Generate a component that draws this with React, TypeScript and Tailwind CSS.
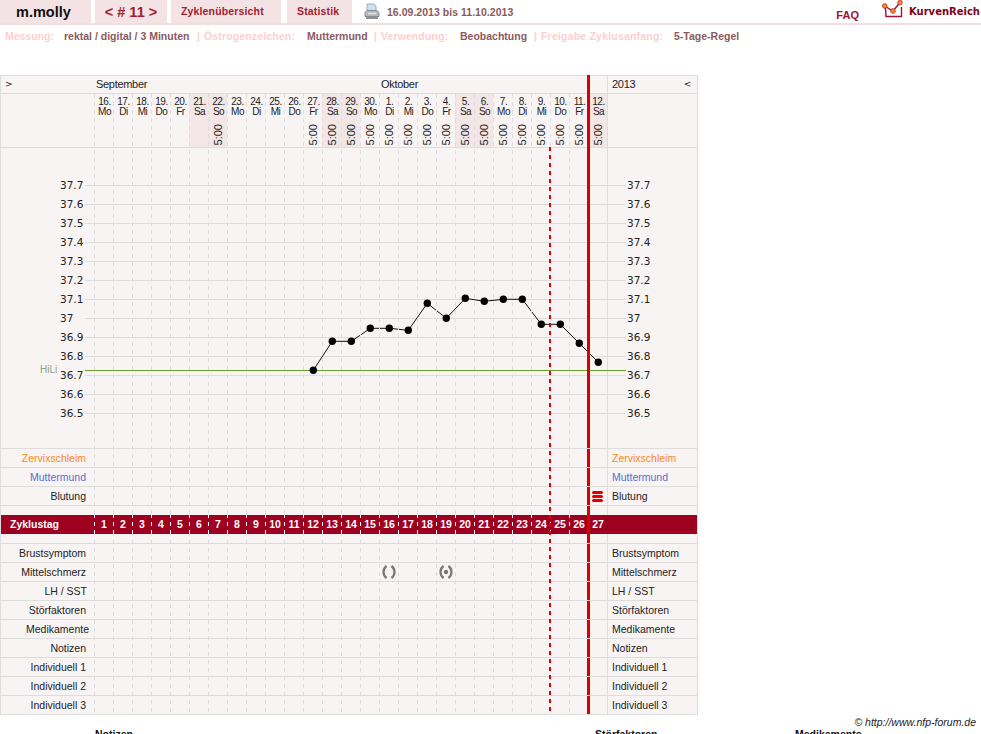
import type { ReactNode } from "react";

const font = "font-['Liberation_Sans',Arial,sans-serif]";

const days = [
  ["16.", "Mo"], ["17.", "Di"], ["18.", "Mi"], ["19.", "Do"], ["20.", "Fr"], ["21.", "Sa"], ["22.", "So"],
  ["23.", "Mo"], ["24.", "Di"], ["25.", "Mi"], ["26.", "Do"], ["27.", "Fr"], ["28.", "Sa"], ["29.", "So"],
  ["30.", "Mo"], ["1.", "Di"], ["2.", "Mi"], ["3.", "Do"], ["4.", "Fr"], ["5.", "Sa"], ["6.", "So"],
  ["7.", "Mo"], ["8.", "Di"], ["9.", "Mi"], ["10.", "Do"], ["11.", "Fr"], ["12.", "Sa"],
];

// days that have a measuring time
const timed = [6, 11, 12, 13, 14, 15, 16, 17, 18, 19, 20, 21, 22, 23, 24, 25, 26];

const temps = [370.3, 341.3, 341.3, 328.3, 328.3, 330.3, 303.3, 318.3, 298.3, 301.3, 299.3, 299.3, 324.3, 324.3, 343.3, 362.3];
const scale = ["37.7", "37.6", "37.5", "37.4", "37.3", "37.2", "37.1", "37", "36.9", "36.8", "36.7", "36.6", "36.5"];

// y of the row lines the red marker is cut by
const rowLines = [448, 467, 486, 505, 543, 562, 581, 600, 619, 638, 657, 676, 695];

function Row({ label, color = "text-[#222]", pad = "pr-[8px]", cells }: { label: string; color?: string; pad?: string; cells?: Record<number, ReactNode> }) {
  return (
    <div className="flex h-[19px] border-t border-[#ddd] text-[10.5px] leading-[18px]">
      <div className={`w-[93px] shrink-0 whitespace-nowrap text-right ${pad} ${color}`}>{label}</div>
      {days.map((_, i) => (
        <div key={i} className="flex h-[18px] w-[19px] shrink-0 items-center justify-center">
          {cells?.[i]}
        </div>
      ))}
      <div className={`flex-1 border-l border-[#ddd] pl-[4px] ${color}`}>{label}</div>
    </div>
  );
}

function Pain({ dot }: { dot?: boolean }) {
  return (
    <svg width="14" height="14" viewBox="0 0 14 14" fill="none" stroke="#777" strokeWidth="2.2" className="shrink-0">
      <path d="M4.5 1C0.5 4 0.5 10 4.5 13" />
      <path d="M9.5 1C13.5 4 13.5 10 9.5 13" />
      {dot && <circle cx="7" cy="7" r="2.2" fill="#777" stroke="none" />}
    </svg>
  );
}

function Bleeding() {
  return (
    <div className="flex w-[11px] shrink-0 flex-col gap-[1px]">
      <div className="h-[3px] rounded-[2px] bg-[#e00000]" />
      <div className="h-[3px] rounded-[2px] bg-[#e00000]" />
      <div className="h-[3px] rounded-[2px] bg-[#e00000]" />
    </div>
  );
}

function Chart() {
  return (
    <svg width="696" height="300" viewBox="1 148 696 300" className="block">
      {scale.map((s, i) => {
        const y = 185 + i * 19;
        return (
          <g key={s}>
            <line x1="85" x2="626" y1={y + 0.5} y2={y + 0.5} stroke="#ddd" />
            <text x="60" y={y + 4} fontFamily="DejaVu Sans" fontSize="10.5" fill="#222">{s}</text>
            <text x="627" y={y + 4} fontFamily="DejaVu Sans" fontSize="10.5" fill="#222">{s}</text>
          </g>
        );
      })}
      <line x1="607.5" x2="607.5" y1="148" y2="448" stroke="#ddd" />
      <text x="40" y="373" fontFamily="Liberation Sans" fontSize="10" fill="#8f9f80">HiLi</text>
      <line x1="85" x2="626" y1="370.5" y2="370.5" stroke="#6a9e2a" />
      <polyline points={temps.map((y, i) => `${313.3 + i * 19},${y}`).join(" ")} fill="none" stroke="#111" strokeWidth="1" />
      {temps.map((y, i) => (
        <circle key={i} cx={313.3 + i * 19} cy={y} r="3.7" fill="#000" />
      ))}
    </svg>
  );
}

function Markers() {
  const lines = days.map((_, i) => 94.5 + i * 19);
  return (
    <svg width="698" height="640" viewBox="0 75 698 640" className="pointer-events-none absolute left-[-1px] top-0">
      {lines.map((x) => (
        <g key={x}>
          <line x1={x} x2={x} y1="94" y2="515" stroke="#ddd" strokeDasharray="4 4" />
          <line x1={x} x2={x} y1="515" y2="534" stroke="#fff" strokeDasharray="4 4" strokeDashoffset="1" />
          <line x1={x} x2={x} y1="534" y2="714" stroke="#ddd" strokeDasharray="4 4" strokeDashoffset="2" />
        </g>
      ))}
      <line x1="550" x2="550" y1="147" y2="711" stroke="#dd0000" strokeWidth="2" strokeDasharray="4 4" />
      <rect x="587" y="75" width="3" height="639" fill="#d80000" />
      {rowLines.map((y) => (
        <rect key={y} x="587" y={y} width="3" height="1" fill="#eec8c8" />
      ))}
    </svg>
  );
}

function Printer() {
  return (
    <svg width="18" height="18" viewBox="0 0 18 18">
      <path d="M4 1h7l2 2v6H4z" fill="#cfe0f0" stroke="#8aa0b8" strokeWidth="0.8" />
      <path d="M2 9.5 4 7.5h10l2 2v4H2z" fill="#b8bcc0" stroke="#777" strokeWidth="0.8" />
      <path d="M3 13.5h12v2.5H3z" fill="#8c8f92" />
      <path d="M5 10.5h8" stroke="#eee" strokeWidth="1" />
    </svg>
  );
}

function Logo() {
  return (
    <svg width="23" height="19" viewBox="0 0 23 19">
      <path d="M3 6.5C4 11 4 14 4 16.5H19.5V7" fill="none" stroke="#a3123a" strokeWidth="1.4" />
      <path d="M2.5 6 11 11 18 2.5" fill="none" stroke="#a3123a" strokeWidth="1.4" />
      <circle cx="2.8" cy="6" r="2.4" fill="#f08a1c" stroke="#a3123a" strokeWidth="0.6" />
      <circle cx="11" cy="11" r="2.4" fill="#f08a1c" stroke="#a3123a" strokeWidth="0.6" />
      <circle cx="18" cy="2.6" r="2.4" fill="#f08a1c" stroke="#a3123a" strokeWidth="0.6" />
    </svg>
  );
}

export default function App() {
  return (
    <div className={`h-[734px] w-[981px] overflow-hidden bg-white ${font}`}>
      {/* Top navigation */}
      <div className="flex h-[25px] items-start border-b-2 border-[#f3dfe0]">
        <div className="flex h-[23px] w-[91px] items-center bg-[#f3e3e4] pl-[16px] pt-[3px] text-[14.5px] font-bold text-[#111]">m.molly</div>
        <div className="ml-[4px] flex h-[23px] w-[72px] items-center justify-center bg-[#f3e3e4] pt-[3px] text-[14.5px] font-bold text-[#a51c30]">&lt; # 11 &gt;</div>
        <div className="ml-[4px] flex h-[23px] w-[110px] items-center bg-[#f3e3e4] pl-[10px] pt-[1px] text-[10.5px] font-bold tracking-[0.15px] text-[#a51c30]">Zyklenübersicht</div>
        <div className="ml-[6px] flex h-[23px] w-[65px] items-center bg-[#f3e3e4] pl-[10px] pt-[1px] text-[10.5px] font-bold tracking-[0.15px] text-[#a51c30]">Statistik</div>
        <div className="ml-[11px] mt-[3px]"><Printer /></div>
        <div className="ml-[6px] mt-[5px] text-[10.5px] font-bold tracking-[0.03px] text-[#8a5a60]">16.09.2013 bis 11.10.2013</div>
        <div className="ml-auto mt-[7px] text-[11px] font-bold text-[#a01030]">FAQ</div>
        <div className="ml-[23px]"><Logo /></div>
        <div className="ml-[4px] mr-[1px] mt-[4px] font-['DejaVu_Sans',sans-serif] text-[10px] font-bold text-[#800020]">KurvenReich</div>
      </div>

      {/* Settings line */}
      <div className="flex h-[50px] pl-[5px] pt-[4px] text-[10.5px] font-bold leading-[14px]">
        <span className="w-[59px] text-[#fbd0d0]">Messung:</span>
        <span className="w-[133px] text-[#8a5a60]">rektal / digital / 3 Minuten</span>
        <span className="w-[7px] text-[#fbd0d0]">|</span>
        <span className="w-[103px] tracking-[0.15px] text-[#fbd0d0]">Östrogenzeichen:</span>
        <span className="w-[67px] text-[#8a5a60]">Muttermund</span>
        <span className="w-[7px] text-[#fbd0d0]">|</span>
        <span className="w-[79px] tracking-[0.1px] text-[#fbd0d0]">Verwendung:</span>
        <span className="w-[74px] text-[#8a5a60]">Beobachtung</span>
        <span className="w-[7px] text-[#fbd0d0]">|</span>
        <span className="w-[133px] tracking-[0.2px] text-[#fbd0d0]">Freigabe Zyklusanfang:</span>
        <span className="text-[#8a5a60]">5-Tage-Regel</span>
      </div>

      {/* Chart table */}
      <div className="relative w-[698px] border-x border-b border-[#ddd] bg-[#f9f4f4] text-[#222]">
        <div className="flex h-[19px] border-y border-[#ddd] text-[11px] leading-[17px] tracking-[-0.3px]">
          <div className="w-[95px] pl-[4px] font-['DejaVu_Sans',sans-serif] text-[9px]">&gt;</div>
          <div className="w-[285px]">September</div>
          <div className="w-[226px]">Oktober</div>
          <div className="flex flex-1 justify-between border-l border-[#ddd] pl-[4px] pr-[6px]">
            <span>2013</span>
            <span className="font-['DejaVu_Sans',sans-serif] text-[9px]">&lt;</span>
          </div>
        </div>

        <div className="flex h-[54px] border-b border-[#ddd]">
          <div className="w-[93px] shrink-0" />
          {days.map(([d, w], i) => (
            <div key={i} className={`flex w-[19px] shrink-0 flex-col items-center pl-[2px] pt-[3px] text-[10px] leading-[9.5px] tracking-[-0.5px] ${i % 7 === 5 || i % 7 === 6 ? "bg-[#f3e6e6]" : ""}`}>
              <span>{d}</span>
              <span>{w}</span>
              {timed.includes(i) && (
                <span className="mt-[8px] rotate-180 text-[11px] leading-[11px] tracking-normal [writing-mode:vertical-rl]">5:00</span>
              )}
            </div>
          ))}
          <div className="flex-1 border-l border-[#ddd]" />
        </div>

        <Chart />

        <Row label="Zervixschleim" color="text-[#f58a1f]" />
        <Row label="Muttermund" color="text-[#5570d0]" />
        <Row label="Blutung" cells={{ 26: <Bleeding /> }} />

        <div className="flex h-[10px] border-t border-[#ddd]">
          <div className="w-[606px]" />
          <div className="flex-1 border-l border-[#ddd]" />
        </div>
        <div className="flex h-[19px] bg-[#9e0020] text-[10.5px] font-bold leading-[19px] text-white">
          <div className="w-[93px] shrink-0 pl-[9px]">Zyklustag</div>
          {days.map((_, i) => (
            <div key={i} className="w-[19px] shrink-0 pl-[1px] text-center">{i + 1}</div>
          ))}
        </div>
        <div className="flex h-[9px]">
          <div className="w-[606px]" />
          <div className="flex-1 border-l border-[#ddd]" />
        </div>

        <Row label="Brustsymptom" />
        <Row label="Mittelschmerz" cells={{ 15: <Pain />, 18: <Pain dot /> }} />
        <Row label="LH / SST" pad="pr-[7px]" />
        <Row label="Störfaktoren" />
        <Row label="Medikamente" pad="pr-[5px]" />
        <Row label="Notizen" />
        <Row label="Individuell 1" />
        <Row label="Individuell 2" />
        <Row label="Individuell 3" />

        <Markers />
      </div>

      {/* Footer */}
      <div className="flex justify-end pr-[5px] text-[10.5px] italic leading-[14px] text-[#222]">© http://www.nfp-forum.de</div>
      <div className="mt-[-2px] flex pl-[95px] text-[10.5px] font-bold leading-[14px] text-[#111]">
        <div className="w-[500px]">Notizen</div>
        <div className="w-[200px]">Störfaktoren</div>
        <div>Medikamente</div>
      </div>
    </div>
  );
}
